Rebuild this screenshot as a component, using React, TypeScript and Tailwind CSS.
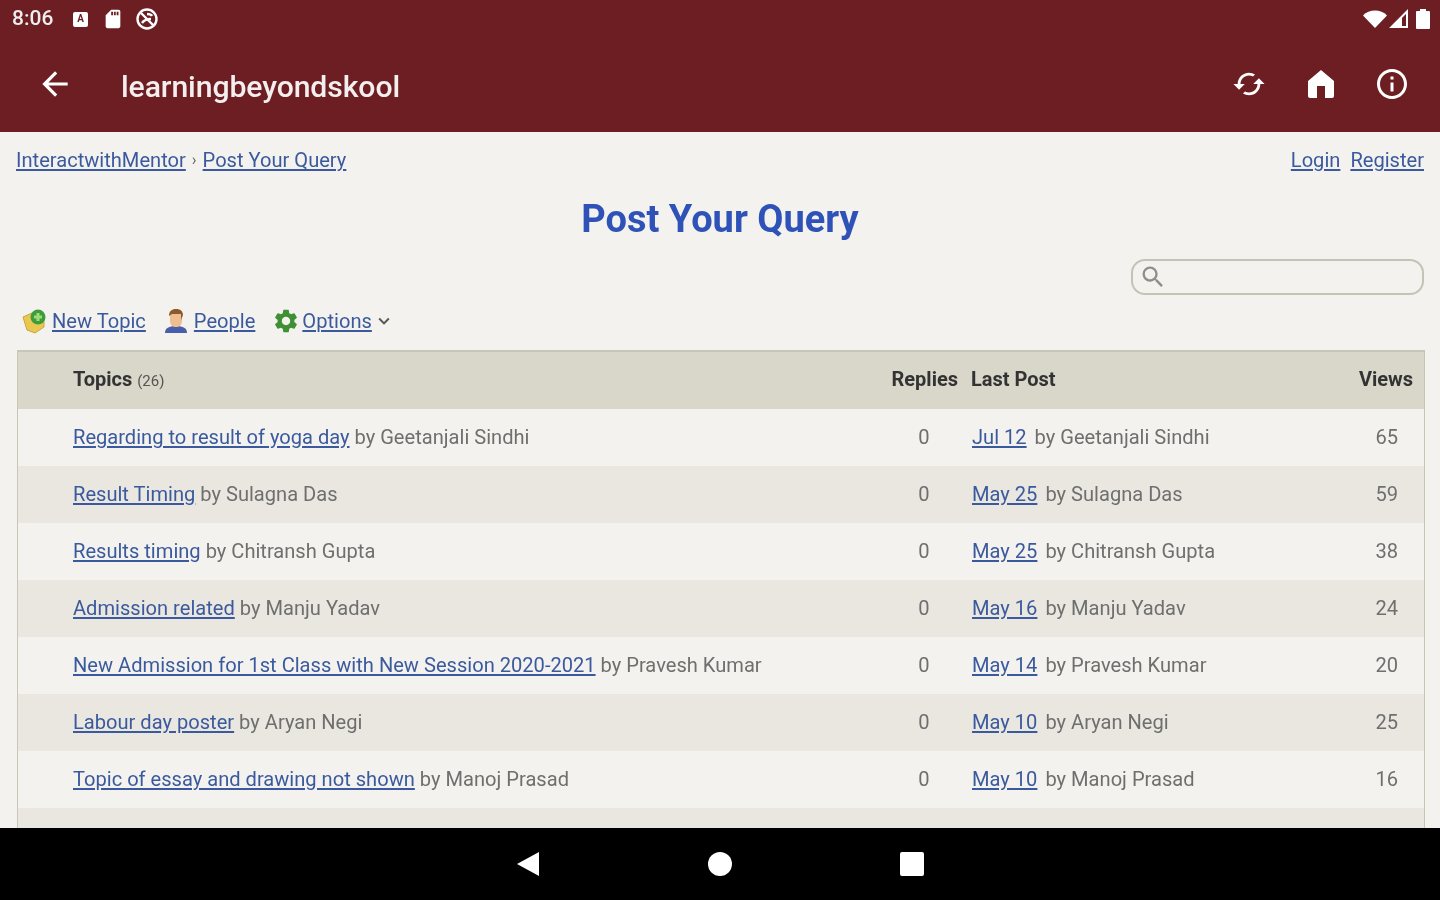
import { MdArrowBack, MdInfoOutline, MdCached, MdSearch, MdExpandMore, MdSettings, MdSdCard } from "react-icons/md"

const rows = [
  { title: "Regarding to result of yoga day", by: "Geetanjali Sindhi", date: "Jul 12", views: 65 },
  { title: "Result Timing", by: "Sulagna Das", date: "May 25", views: 59 },
  { title: "Results timing", by: "Chitransh Gupta", date: "May 25", views: 38 },
  { title: "Admission related", by: "Manju Yadav", date: "May 16", views: 24 },
  { title: "New Admission for 1st Class with New Session 2020-2021", by: "Pravesh Kumar", date: "May 14", views: 20 },
  { title: "Labour day poster", by: "Aryan Negi", date: "May 10", views: 25 },
  { title: "Topic of essay and drawing not shown", by: "Manoj Prasad", date: "May 10", views: 16 },
]

const link = "text-[#3b5a9e] underline underline-offset-2"
const grid = "grid grid-cols-[872px_68px_1fr_80px] items-center"

function StatusBar() {
  return (
    <div className="flex h-[38px] items-center justify-between pl-[12px] pr-[10px] text-white">
      <div className="flex items-center">
        <span className="w-[41px] text-[21px] font-medium text-[#eee]">8:06</span>
        {/* keyboard badge */}
        <span className="ml-[20px] flex h-[15px] w-[15px] items-center justify-center rounded-[2px] bg-white text-[10px] font-bold leading-none text-[#6d1e22]">A</span>
        <MdSdCard className="ml-[14px] text-[22px]" />
        <svg className="ml-[11px]" width="24" height="24" viewBox="0 0 24 24" fill="none" stroke="white" strokeWidth="2.4">
          <circle cx="12" cy="12" r="9.5" />
          <path d="M6 6l12 12M7 16c2-3 5-4 9-4M12 7c2 0 4 0 5 2" />
        </svg>
      </div>
      <div className="flex items-center">
        <svg width="24" height="20" viewBox="0 0 24 20"><path d="M0 6.5C3 3 7.500 1.500 12 1.500S21 3 24 6.500L12 19z" fill="white" /></svg>
        <svg className="ml-[2px]" width="20" height="20" viewBox="0 0 20 20" fill="none" stroke="white" strokeWidth="2"><path d="M18 2.500V18H2.500z" /><path d="M13 8v9h-9z" fill="white" stroke="none" /></svg>
        <svg className="ml-[7px]" width="14" height="20" viewBox="0 0 14 20"><path d="M4 0h6v2h3a1 1 0 0 1 1 1v16a1 1 0 0 1-1 1H1a1 1 0 0 1-1-1V3a1 1 0 0 1 1-1h3z" fill="white" /></svg>
      </div>
    </div>
  )
}

function Toolbar() {
  return (
    <div className="flex h-[94px] items-center pb-[3px] pl-[36px] pr-[30px] text-white">
      <MdArrowBack className="text-[38px]" />
      <div className="ml-[47px] flex-1 pt-[6px] text-[30.2px] font-medium tracking-[-0.1px] text-[#f4eeee]">learningbeyondskool</div>
      <div className="flex items-center">
        <MdCached className="text-[34px]" />
        <svg className="ml-[42px]" width="26" height="28" viewBox="0 0 26 28">
          <path d="M13 0l13 11v15a2 2 0 0 1-2 2h-7V16H9v12H2a2 2 0 0 1-2-2V11z" fill="white" />
        </svg>
        <MdInfoOutline className="ml-[40px] text-[36px]" />
      </div>
    </div>
  )
}

function NewTopicIcon() {
  return (
    <svg width="26" height="26" viewBox="0 0 26 26">
      <path d="M1 9l9-4 12 4v10l-9 6-8-3z" fill="#e8c850" stroke="#c9a53c" />
      <path d="M16 1.500a7.500 7.500 0 1 1 0 15a7.500 7.500 0 0 1 0-15z" fill="#3f9c3a" />
      <path d="M14.500 5h3v2.500H20v3h-2.500V13h-3v-2.500H12v-3h2.500z" fill="#9ddc7a" />
    </svg>
  )
}

function PersonIcon() {
  return (
    <svg width="24" height="26" viewBox="0 0 24 26">
      <path d="M1 25c0-5 4-7 11-7s11 2 11 7z" fill="#4a5ea8" />
      <path d="M6 6c0-4 3-5 6-5s6 1 6 5v7c0 4-3 6-6 6s-6-2-6-6z" fill="#eebd90" />
      <path d="M5 8c0-5 3-7 7-7s7 2 7 6l-2 5V6H8z" fill="#8a5a2c" />
    </svg>
  )
}

function ActionBar() {
  return (
    <div className="flex h-[32px] items-center pl-[22px] text-[20.1px]">
      <NewTopicIcon />
      <a className={`${link} ml-[4px]`}>New Topic</a>
      <span className="ml-[18px]"><PersonIcon /></span>
      <a className={`${link} ml-[6px]`}>People</a>
      <MdSettings className="ml-[17px] text-[28px] text-[#3f8f35]" />
      <a className={`${link} ml-[2px]`}>Options</a>
      <MdExpandMore className="ml-[1px] text-[22px] text-[#555]" />
    </div>
  )
}

export default function App() {
  return (
    <div className="flex h-[900px] w-[1440px] flex-col overflow-hidden bg-black font-['Roboto',sans-serif] blur-[0.5px]">
      <header className="h-[132px] shrink-0 bg-[#6d1e22]">
        <StatusBar />
        <Toolbar />
      </header>

      <main className="h-[696px] shrink-0 overflow-hidden bg-[#f3f2ee]">
        <div className="flex h-[57px] items-center justify-between pl-[16px] pr-[16px] text-[20.1px]">
          <div className="flex items-center">
            <a className={link}>InteractwithMentor</a>
            <span className="mx-[6px] text-[16px] text-[#666]">›</span>
            <a className={link}>Post Your Query</a>
          </div>
          <div className="flex gap-[10px]">
            <a className={link}>Login</a>
            <a className={link}>Register</a>
          </div>
        </div>

        <h1 className="h-[70px] pt-[5px] text-center text-[38px] font-bold leading-[50px] text-[#2f52b8]">Post Your Query</h1>

        <div className="flex justify-end pr-[16px]">
          <div className="flex h-[36px] w-[293px] items-center rounded-[14px] border-2 border-[#c5c3b4] pl-[6px]">
            <MdSearch className="text-[28px] text-[#8d8d8d]" />
          </div>
        </div>

        <div className="mt-[10px]">
          <ActionBar />
        </div>

        <div className="ml-[17px] mr-[15px] mt-[13px] border-x border-t-2 border-[#c9c6b8]">
          <div className={`${grid} h-[56.5px] bg-[#d9d6ca] pb-[2px] text-[20px] font-bold text-[#333]`}>
            <div className="pl-[55px]">Topics <span className="text-[15px] font-normal text-[#555]">(26)</span></div>
            <div className="text-right">Replies</div>
            <div className="pl-[13px]">Last Post</div>
            <div className="pr-[11px] text-right">Views</div>
          </div>
          {rows.map((r, i) => (
            <div key={r.title} className={`${grid} h-[57px] text-[20.1px] text-[#6f6f6f] ${i % 2 === 0 ? "bg-[#f3f2ee]" : "bg-[#e9e7e0]"}`}>
              <div className="pl-[55px]"><a className={link}>{r.title}</a> by {r.by}</div>
              <div className="text-center">0</div>
              <div className="pl-[14px]"><a className={link}>{r.date}</a> <span className="ml-[3px]">by {r.by}</span></div>
              <div className="pr-[26px] text-right">{r.views}</div>
            </div>
          ))}
          <div className="h-[57px] bg-[#e9e7e0]" />
        </div>
      </main>

      <nav className="flex h-[72px] items-center justify-center gap-[168px] bg-black">
        <svg width="24" height="26" viewBox="0 0 24 26"><path d="M23 1v24L1 13z" fill="white" /></svg>
        <span className="h-[24px] w-[24px] rounded-full bg-white" />
        <span className="h-[24px] w-[24px] rounded-[2px] bg-white" />
      </nav>
    </div>
  )
}
